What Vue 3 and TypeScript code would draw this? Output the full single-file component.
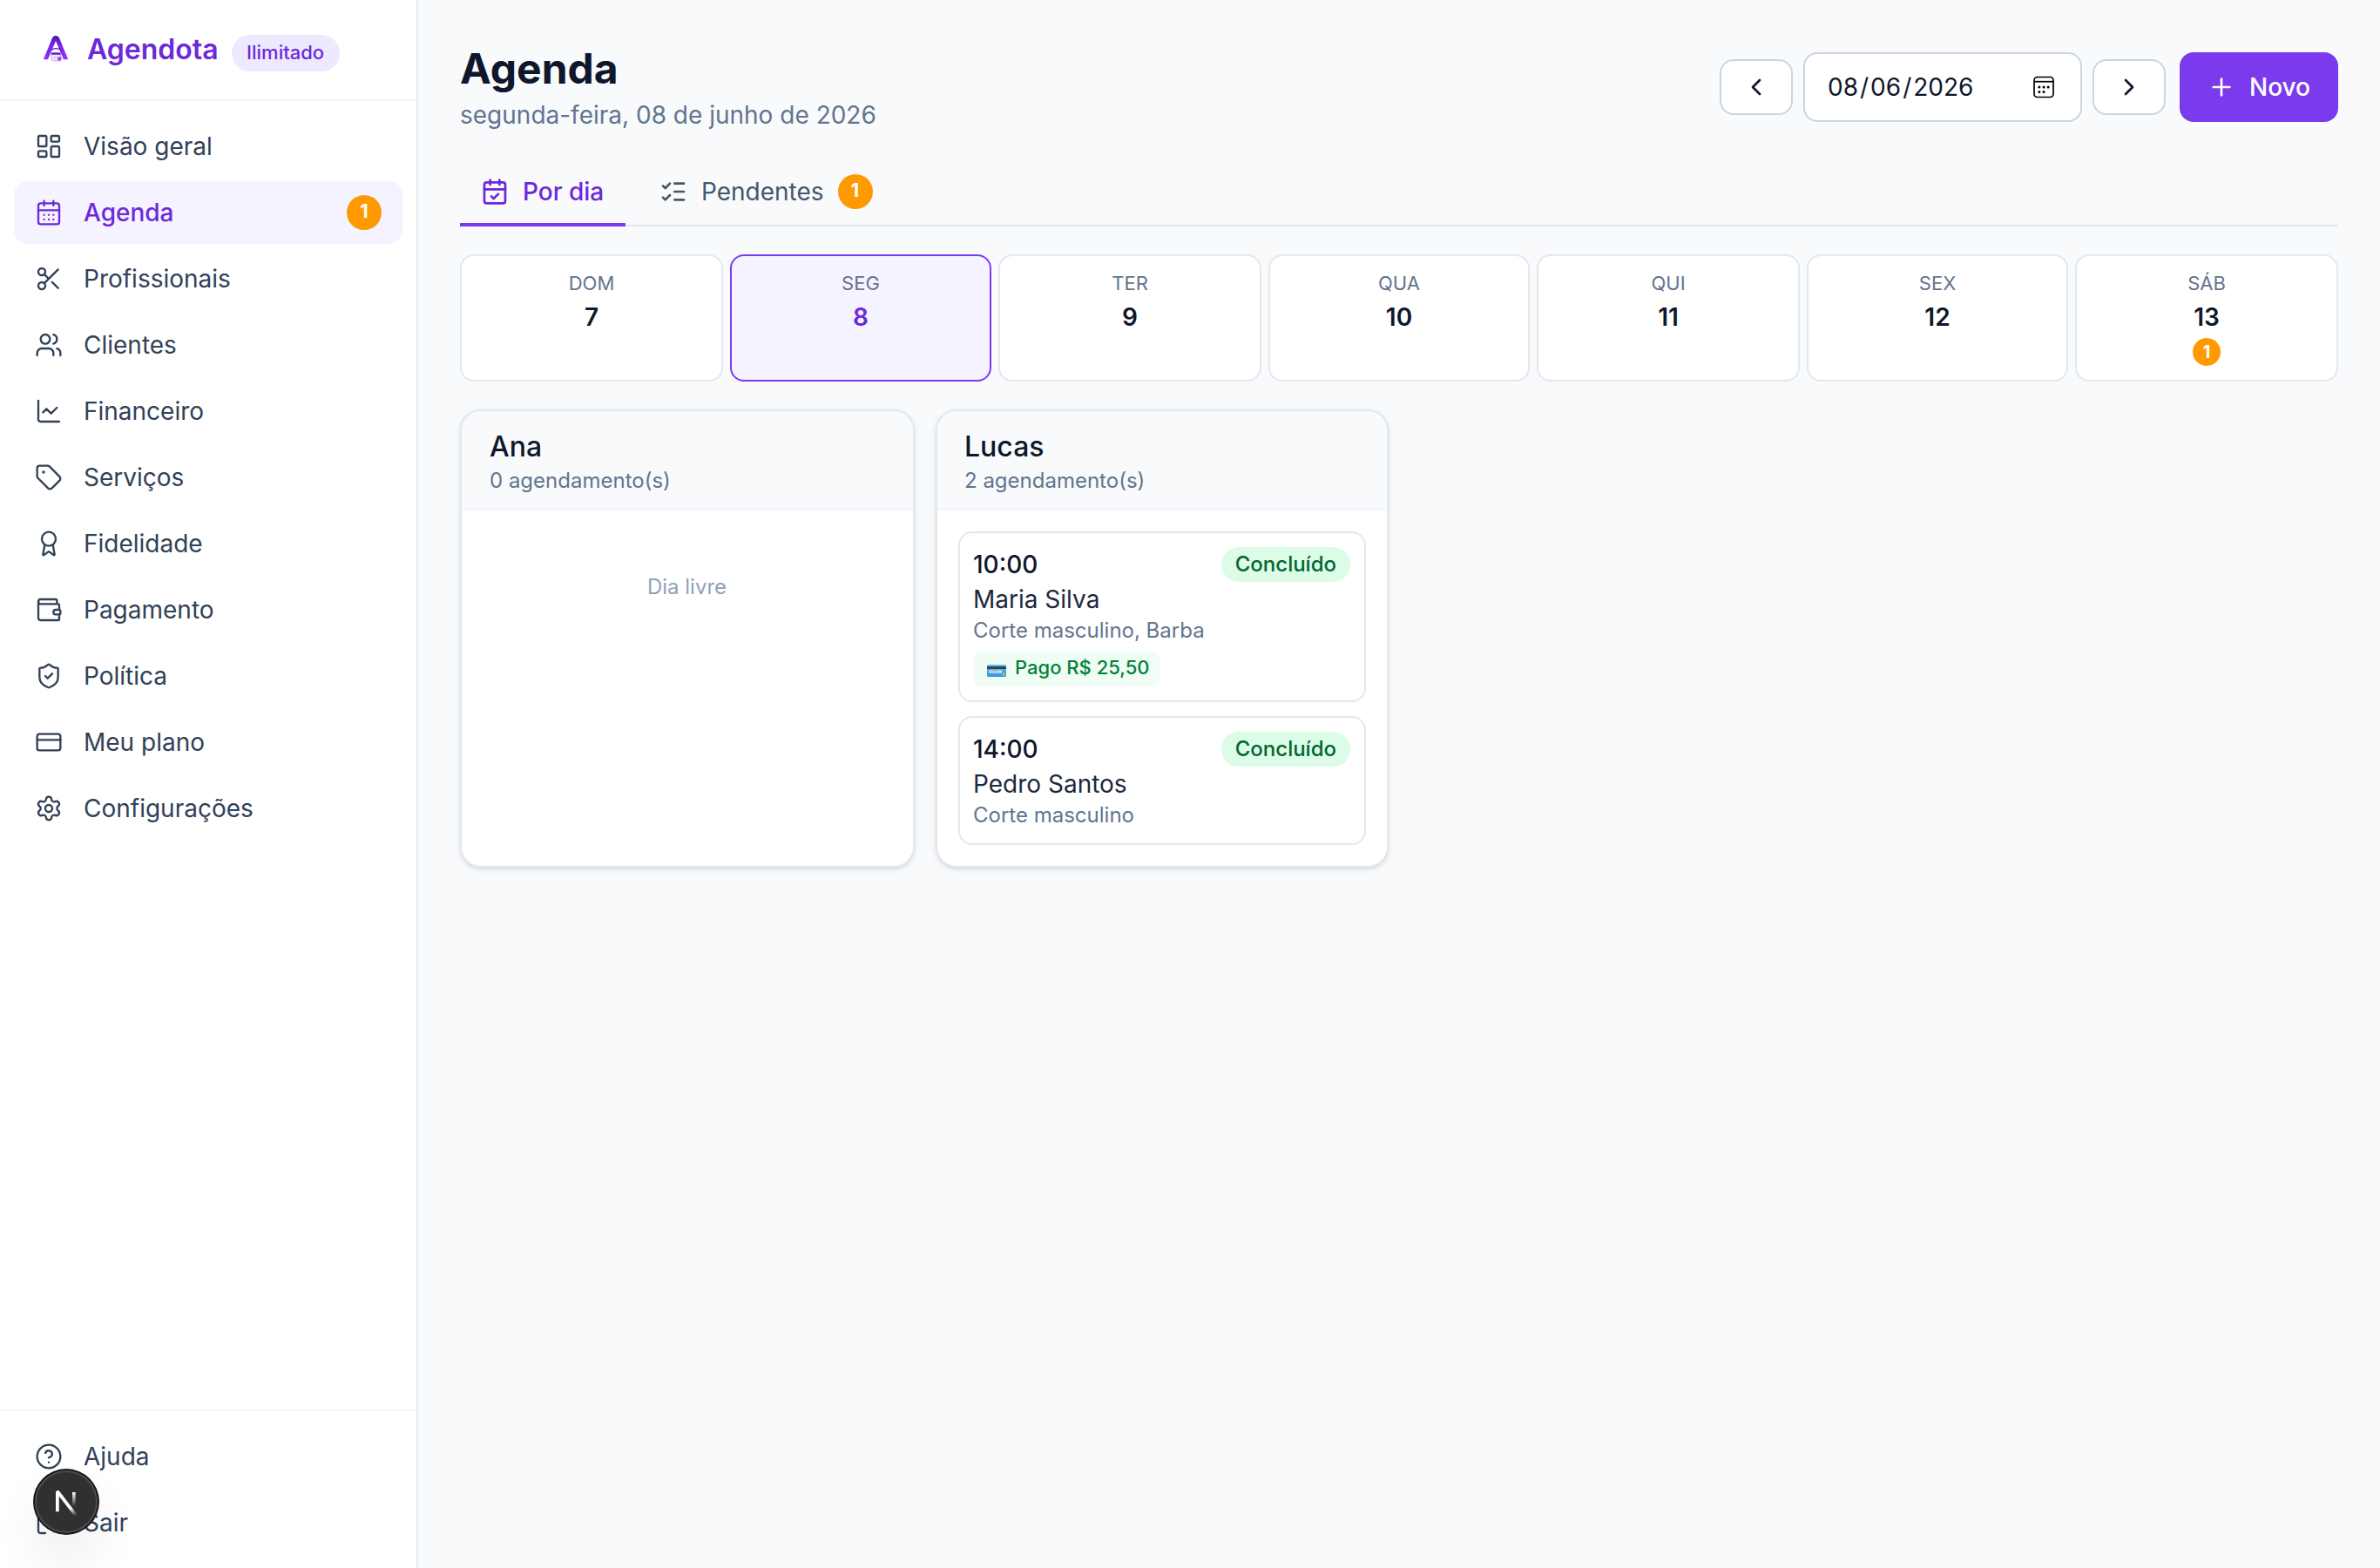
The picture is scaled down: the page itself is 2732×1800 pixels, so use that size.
<script setup lang="ts">
interface NavItem {
  label: string
  icon: string
  active?: boolean
  badge?: number
}

interface Day {
  label: string
  number: number
  selected?: boolean
  pending?: number
}

interface Appointment {
  time: string
  client: string
  services: string
  status: string
  paid?: string
}

interface Professional {
  name: string
  appointments: Appointment[]
}

const icons: Record<string, string> = {
  dashboard:
    '<rect width="7" height="9" x="3" y="3" rx="1"/><rect width="7" height="5" x="14" y="3" rx="1"/><rect width="7" height="9" x="14" y="12" rx="1"/><rect width="7" height="5" x="3" y="16" rx="1"/>',
  calendar:
    '<path d="M8 2v4"/><path d="M16 2v4"/><rect width="18" height="18" x="3" y="4" rx="2"/><path d="M3 10h18"/><path d="M8 14h.01"/><path d="M12 14h.01"/><path d="M16 14h.01"/><path d="M8 18h.01"/><path d="M12 18h.01"/><path d="M16 18h.01"/>',
  scissors:
    '<circle cx="6" cy="6" r="3"/><path d="M8.12 8.12 12 12"/><path d="M20 4 8.12 15.88"/><circle cx="6" cy="18" r="3"/><path d="M14.8 14.8 20 20"/>',
  users:
    '<path d="M16 21v-2a4 4 0 0 0-4-4H6a4 4 0 0 0-4 4v2"/><path d="M16 3.128a4 4 0 0 1 0 7.744"/><path d="M22 21v-2a4 4 0 0 0-3-3.87"/><circle cx="9" cy="7" r="4"/>',
  chart: '<path d="M3 3v16a2 2 0 0 0 2 2h16"/><path d="m19 9-5 5-4-4-3 3"/>',
  tag:
    '<path d="M12.586 2.586A2 2 0 0 0 11.172 2H4a2 2 0 0 0-2 2v7.172a2 2 0 0 0 .586 1.414l8.704 8.704a2.426 2.426 0 0 0 3.42 0l6.58-6.58a2.426 2.426 0 0 0 0-3.42z"/><circle cx="7.5" cy="7.5" r=".5" fill="currentColor"/>',
  award:
    '<path d="m15.477 12.89 1.515 8.526a.5.5 0 0 1-.81.47l-3.58-2.687a1 1 0 0 0-1.197 0l-3.586 2.686a.5.5 0 0 1-.81-.469l1.514-8.526"/><circle cx="12" cy="8" r="6"/>',
  wallet:
    '<path d="M19 7V4a1 1 0 0 0-1-1H5a2 2 0 0 0 0 4h15a1 1 0 0 1 1 1v4h-3a2 2 0 0 0 0 4h3a1 1 0 0 0 1-1v-2a1 1 0 0 0-1-1"/><path d="M3 5v14a2 2 0 0 0 2 2h15a1 1 0 0 0 1-1v-4"/>',
  shield:
    '<path d="M20 13c0 5-3.5 7.5-7.66 8.95a1 1 0 0 1-.67-.01C7.5 20.5 4 18 4 13V6a1 1 0 0 1 1-1c2 0 4.5-1.2 6.24-2.72a1.17 1.17 0 0 1 1.52 0C14.51 3.81 17 5 19 5a1 1 0 0 1 1 1z"/><path d="m9 12 2 2 4-4"/>',
  card: '<rect width="20" height="14" x="2" y="5" rx="2"/><path d="M2 10h20"/>',
  settings:
    '<path d="M9.671 4.136a2.34 2.34 0 0 1 4.659 0 2.34 2.34 0 0 0 3.319 1.915 2.34 2.34 0 0 1 2.33 4.033 2.34 2.34 0 0 0 0 3.831 2.34 2.34 0 0 1-2.33 4.033 2.34 2.34 0 0 0-3.319 1.915 2.34 2.34 0 0 1-4.659 0 2.34 2.34 0 0 0-3.32-1.915 2.34 2.34 0 0 1-2.33-4.033 2.34 2.34 0 0 0 0-3.831A2.34 2.34 0 0 1 6.35 6.051a2.34 2.34 0 0 0 3.319-1.915"/><circle cx="12" cy="12" r="3"/>',
  help:
    '<circle cx="12" cy="12" r="10"/><path d="M9.09 9a3 3 0 0 1 5.83 1c0 2-3 3-3 3"/><path d="M12 17h.01"/>',
  logout:
    '<path d="m16 17 5-5-5-5"/><path d="M21 12H9"/><path d="M9 21H5a2 2 0 0 1-2-2V5a2 2 0 0 1 2-2h4"/>',
  calendarCheck:
    '<path d="M8 2v4"/><path d="M16 2v4"/><rect width="18" height="18" x="3" y="4" rx="2"/><path d="M3 10h18"/><path d="m9 16 2 2 4-4"/>',
  listChecks:
    '<path d="M13 5h8"/><path d="M13 12h8"/><path d="M13 19h8"/><path d="m3 17 2 2 4-4"/><path d="m3 7 2 2 4-4"/>',
  left: '<path d="m15 18-6-6 6-6"/>',
  right: '<path d="m9 18 6-6-6-6"/>',
  plus: '<path d="M5 12h14"/><path d="M12 5v14"/>',
}

const nav: NavItem[] = [
  { label: 'Visão geral', icon: 'dashboard' },
  { label: 'Agenda', icon: 'calendar', active: true, badge: 1 },
  { label: 'Profissionais', icon: 'scissors' },
  { label: 'Clientes', icon: 'users' },
  { label: 'Financeiro', icon: 'chart' },
  { label: 'Serviços', icon: 'tag' },
  { label: 'Fidelidade', icon: 'award' },
  { label: 'Pagamento', icon: 'wallet' },
  { label: 'Política', icon: 'shield' },
  { label: 'Meu plano', icon: 'card' },
  { label: 'Configurações', icon: 'settings' },
]

const footerNav: NavItem[] = [
  { label: 'Ajuda', icon: 'help' },
  { label: 'Sair', icon: 'logout' },
]

const days: Day[] = [
  { label: 'Dom', number: 7 },
  { label: 'Seg', number: 8, selected: true },
  { label: 'Ter', number: 9 },
  { label: 'Qua', number: 10 },
  { label: 'Qui', number: 11 },
  { label: 'Sex', number: 12 },
  { label: 'Sáb', number: 13, pending: 1 },
]

const professionals: Professional[] = [
  { name: 'Ana', appointments: [] },
  {
    name: 'Lucas',
    appointments: [
      {
        time: '10:00',
        client: 'Maria Silva',
        services: 'Corte masculino, Barba',
        status: 'Concluído',
        paid: 'Pago R$ 25,50',
      },
      { time: '14:00', client: 'Pedro Santos', services: 'Corte masculino', status: 'Concluído' },
    ],
  },
]
</script>

<template>
  <div class="shell">
    <aside class="sidebar">
      <div class="brand">
        <svg class="logo" viewBox="0 0 32 32">
          <defs>
            <linearGradient id="logoFill" x1="0" y1="0" x2="0" y2="1">
              <stop offset="0" stop-color="#4c12b4" />
              <stop offset="0.4" stop-color="#7c22ee" />
              <stop offset="1" stop-color="#9333f5" />
            </linearGradient>
          </defs>
          <path
            d="M1.8 28.2 12 3.6C12.8 1.8 14.2.9 16 .9s3.200.9 4 2.700L30.200 28.200h-5.200L16 7 7 28.200Z"
            fill="url(#logoFill)"
          />
          <path d="M8.600 21.500C11 15.400 20 14.200 23.300 20.500L22 17.200C18.500 13.800 12.500 14.200 10 18Z" fill="#4c12b4" />
          <rect x="11" y="20.500" width="10.500" height="9.300" rx="1.500" fill="#f3edff" stroke="#bfa0f2" stroke-width="0.900" />
          <path d="M11 20.500h10.500v2.300H11Z" fill="#5a1fc0" />
          <path d="M13 25.300h5M13 27.600h4" stroke="#c9b3f3" stroke-width="1" />
          <circle cx="20.300" cy="27.500" r="2.400" fill="#9b4df5" />
        </svg>
        <span class="brand-name">Agendota</span>
        <span class="plan">Ilimitado</span>
      </div>

      <nav class="nav">
        <a v-for="item in nav" :key="item.label" class="nav-item" :class="{ active: item.active }">
          <svg class="icon thin" viewBox="0 0 24 24" v-html="icons[item.icon]" />
          <span class="nav-label">{{ item.label }}</span>
          <span v-if="item.badge" class="count">{{ item.badge }}</span>
        </a>
      </nav>

      <div class="nav nav-footer">
        <a v-for="item in footerNav" :key="item.label" class="nav-item">
          <svg class="icon thin" viewBox="0 0 24 24" v-html="icons[item.icon]" />
          <span class="nav-label">{{ item.label }}</span>
        </a>
      </div>
    </aside>

    <main class="main">
      <header class="page-head">
        <div>
          <h1>Agenda</h1>
          <p class="subtitle">segunda-feira, 08 de junho de 2026</p>
        </div>
        <div class="controls">
          <button class="step">
            <svg class="icon" viewBox="0 0 24 24" v-html="icons.left" />
          </button>
          <div class="date">
            <span class="date-value"><i>08</i>/<i>06</i>/<i>2026</i></span>
            <svg class="date-icon" viewBox="0 0 24 26">
              <rect x="1" y="1.500" width="22" height="23" rx="3.500" fill="none" stroke="#000" stroke-width="1.700" />
              <path d="M1 6.700h22" stroke="#000" stroke-width="1.700" />
              <g fill="#000">
                <circle cx="6.900" cy="13" r="1.500" />
                <circle cx="12" cy="13" r="1.500" />
                <circle cx="17.100" cy="13" r="1.500" />
                <circle cx="6.900" cy="18.400" r="1.500" />
                <circle cx="12" cy="18.400" r="1.500" />
              </g>
            </svg>
          </div>
          <button class="step">
            <svg class="icon" viewBox="0 0 24 24" v-html="icons.right" />
          </button>
          <button class="new">
            <svg class="icon" viewBox="0 0 24 24" v-html="icons.plus" />
            <span>Novo</span>
          </button>
        </div>
      </header>

      <div class="tabs">
        <a class="tab active">
          <svg class="icon" viewBox="0 0 24 24" v-html="icons.calendarCheck" />
          <span>Por dia</span>
        </a>
        <a class="tab">
          <svg class="icon" viewBox="0 0 24 24" v-html="icons.listChecks" />
          <span>Pendentes</span>
          <span class="count">1</span>
        </a>
      </div>

      <div class="week">
        <div v-for="day in days" :key="day.label" class="day" :class="{ selected: day.selected }">
          <span class="day-label">{{ day.label }}</span>
          <span class="day-number">{{ day.number }}</span>
          <span v-if="day.pending" class="day-count">{{ day.pending }}</span>
        </div>
      </div>

      <div class="columns">
        <section v-for="pro in professionals" :key="pro.name" class="column">
          <div class="column-head">
            <div class="column-name">{{ pro.name }}</div>
            <div class="column-total">{{ pro.appointments.length }} agendamento(s)</div>
          </div>
          <div class="column-body">
            <p v-if="!pro.appointments.length" class="empty">Dia livre</p>
            <article v-for="appt in pro.appointments" :key="appt.time" class="appt">
              <div class="appt-top">
                <span class="appt-time">{{ appt.time }}</span>
                <span class="status">{{ appt.status }}</span>
              </div>
              <div class="appt-client">{{ appt.client }}</div>
              <div class="appt-services">{{ appt.services }}</div>
              <div v-if="appt.paid" class="paid">
                <svg class="paid-icon" viewBox="0 0 22 14">
                  <defs>
                    <linearGradient id="cardFill" x1="0" y1="0" x2="0" y2="1">
                      <stop offset="0" stop-color="#55c4f2" />
                      <stop offset="1" stop-color="#2d9be0" />
                    </linearGradient>
                  </defs>
                  <rect width="22" height="14" rx="1.500" fill="url(#cardFill)" />
                  <rect y="2" width="22" height="3" fill="#37414f" />
                  <rect x="2.300" y="6.400" width="15" height="3.300" rx="1" fill="#d4dde8" />
                  <path d="M4 8h9" stroke="#a3a7b5" stroke-width="0.900" />
                  <rect x="18" y="9.800" width="2.400" height="3" fill="#e3c03c" />
                </svg>
                <span>{{ appt.paid }}</span>
              </div>
            </article>
          </div>
        </section>
      </div>
    </main>

    <div class="dev-badge">
      <svg viewBox="0 0 72 72">
        <defs>
          <linearGradient id="diagFade" gradientUnits="userSpaceOnUse" x1="9.950" y1="10.630" x2="13.300" y2="15.200">
            <stop stop-color="#fff" />
            <stop offset="0.900" stop-color="#fff" stop-opacity="0" />
          </linearGradient>
          <linearGradient id="barFade" gradientUnits="userSpaceOnUse" x1="11.820" y1="1.500" x2="11.800" y2="9.600">
            <stop stop-color="#fff" />
            <stop offset="1" stop-color="#fff" stop-opacity="0" />
          </linearGradient>
        </defs>
        <g transform="translate(21.200 22) scale(2)" fill="none" stroke-width="1.860">
          <path d="M13.300 15.200 2.340 1V12.600" stroke="url(#diagFade)" stroke-linejoin="bevel" />
          <path d="M11.825 1.500V13.100" stroke="url(#barFade)" />
        </g>
      </svg>
    </div>
  </div>
</template>

<style>
html,
body {
  margin: 0;
  background: #f8fafc;
}
</style>

<style scoped>
.shell {
  position: relative;
  display: flex;
  width: 2732px;
  height: 1800px;
  overflow: hidden;
  background: #f8fafc;
  color: #0f172b;
  font-family: Inter, 'Liberation Sans', sans-serif;
  font-size: 28px;
  line-height: 40px;
}

.shell *,
.shell *::before {
  box-sizing: border-box;
}

.icon {
  flex: none;
  width: 32px;
  height: 32px;
  fill: none;
  stroke: currentColor;
  stroke-width: 2;
  stroke-linecap: round;
  stroke-linejoin: round;
}

.icon.thin {
  stroke-width: 1.75;
}

/* Sidebar */
.sidebar {
  display: flex;
  flex: none;
  flex-direction: column;
  width: 480px;
  border-right: 2px solid #e2e8f0;
  background: #fff;
}

.brand {
  display: flex;
  align-items: flex-start;
  height: 116px;
  padding: 40px 48px 0;
  border-bottom: 2px solid #f1f5f9;
}

.logo {
  width: 32px;
  height: 32px;
}

.brand-name {
  margin-left: 20px;
  color: #6d28d9;
  font-size: 32px;
  font-weight: 600;
  line-height: 34px;
}

.plan {
  width: 124px;
  height: 42px;
  margin-left: 15px;
  border-radius: 21px;
  background: #ede9fe;
  color: #6d28d9;
  font-size: 22px;
  font-weight: 500;
  line-height: 40px;
  text-align: center;
}

.nav {
  display: flex;
  flex: 1;
  flex-direction: column;
  gap: 4px;
  padding: 16px;
}

.nav-footer {
  flex: none;
  border-top: 2px solid #f1f5f9;
}

.nav-item {
  display: flex;
  align-items: center;
  gap: 24px;
  height: 72px;
  padding: 0 24px;
  border-radius: 16px;
  color: #314158;
}

.nav-label {
  flex: 1;
}

.nav-item.active {
  background: #f5f3ff;
  color: #6d28d9;
  font-weight: 500;
}

.count {
  flex: none;
  width: 40px;
  height: 40px;
  border-radius: 50%;
  background: #fe9a00;
  color: #fff;
  font-size: 22px;
  font-weight: 700;
  line-height: 36px;
  text-align: center;
}

/* Page header */
.main {
  flex: 1;
  padding: 48px;
}

.page-head {
  display: flex;
  align-items: center;
  justify-content: space-between;
  height: 104px;
}

h1 {
  margin: 0 0 3px;
  font-size: 48px;
  font-weight: 700;
  line-height: 61px;
}

.subtitle {
  margin: 0;
  color: #62748e;
}

.controls {
  display: flex;
  align-items: center;
  gap: 12px;
}

button {
  display: flex;
  align-items: center;
  margin: 0;
  border: 0;
  font: inherit;
}

.step {
  height: 64px;
  padding: 0 24px;
  border: 2px solid #cad5e2;
  border-radius: 16px;
  background: #fff;
  color: #0f172b;
}

.date {
  display: flex;
  align-items: center;
  justify-content: space-between;
  width: 320px;
  height: 80px;
  padding: 0 30px 0 24px;
  border: 2px solid #cad5e2;
  border-radius: 16px;
  background: #fff;
}

.date-value i {
  padding: 0 2px;
  font-style: normal;
}

.date-icon {
  width: 24px;
  height: 26px;
}

.new {
  gap: 16px;
  width: 182px;
  height: 80px;
  margin-left: 4px;
  padding: 0 32px;
  border-radius: 16px;
  background: #7c3aed;
  color: #fff;
  font-weight: 500;
}

/* Tabs */
.tabs {
  display: flex;
  gap: 15px;
  height: 76px;
  margin-top: 32px;
  border-bottom: 2px solid #e2e8f0;
}

.tab {
  display: flex;
  align-items: center;
  gap: 16px;
  min-width: 190px;
  height: 76px;
  padding: 16px 24px;
  border-bottom: 4px solid transparent;
  color: #45556c;
}

.tab.active {
  border-color: #7c3aed;
  color: #6d28d9;
  font-weight: 500;
}

/* Week strip */
.week {
  display: grid;
  grid-template-columns: 302px repeat(3, 300px 302px);
  gap: 8px;
  margin-top: 32px;
}

.day {
  display: flex;
  flex-direction: column;
  align-items: center;
  height: 146px;
  padding: 16px;
  border: 2px solid #e2e8f0;
  border-radius: 16px;
  background: #fff;
}

.day-label {
  margin: 1px 0 5px;
  color: #62748e;
  font-size: 22px;
  line-height: 28px;
  text-transform: uppercase;
}

.day-number {
  font-weight: 600;
}

.day-count {
  width: 32px;
  height: 32px;
  margin-top: 4px;
  border-radius: 50%;
  background: #fe9a00;
  color: #fff;
  font-size: 20px;
  font-weight: 700;
  line-height: 32px;
  text-align: center;
}

.day.selected {
  border-color: #7c3aed;
  background: #f5f3ff;
}

.day.selected .day-number {
  color: #6d28d9;
}

/* Professional columns */
.columns {
  display: grid;
  grid-template-columns: repeat(2, 522px 520px);
  gap: 24px;
  margin-top: 32px;
}

.column {
  overflow: hidden;
  border: 2px solid #e2e8f0;
  border-radius: 24px;
  background: #fff;
  box-shadow:
    0 2px 6px rgba(0, 0, 0, 0.1),
    0 2px 4px -2px rgba(0, 0, 0, 0.1);
}

.column-head {
  padding: 17px 32px 16px;
  border-bottom: 2px solid #f1f5f9;
  background: #f8fafc;
}

.column:nth-child(even) .column-head {
  padding-left: 31px;
}

.column-name {
  font-size: 32px;
  font-weight: 500;
  line-height: 48px;
}

.column-total {
  margin-top: -1px;
  color: #62748e;
  font-size: 24px;
  line-height: 32px;
}

.column-body {
  display: flex;
  flex-direction: column;
  gap: 16px;
  padding: 24px;
}

.empty {
  margin: 48px 1px 48px 0;
  color: #90a1b9;
  font-size: 24px;
  line-height: 32px;
  text-align: center;
}

.appt {
  padding: 16px 16px 16px 15px;
  border: 2px solid #e2e8f0;
  border-radius: 16px;
}

.appt-top {
  display: flex;
  align-items: center;
  justify-content: space-between;
}

.appt-time {
  font-weight: 500;
}

.status {
  height: 40px;
  padding: 0 16px;
  border-radius: 20px;
  background: #dcfce7;
  color: #016630;
  font-size: 24px;
  font-weight: 500;
  line-height: 39px;
}

.appt-client {
  color: #1d293d;
}

.appt-services {
  color: #62748e;
  font-size: 24px;
  line-height: 32px;
}

.paid {
  display: flex;
  align-items: center;
  width: fit-content;
  height: 40px;
  margin: 8px 0 0 1px;
  padding: 0 12px 0 15px;
  border-radius: 8px;
  background: #f0fdf4;
  color: #008236;
  font-size: 22px;
  font-weight: 500;
  line-height: 36px;
}

.paid span {
  height: 40px;
}

.paid-icon {
  width: 22px;
  height: 14px;
  margin: 4px 10px 0 0;
}

/* Floating dev tools button */
.dev-badge {
  position: absolute;
  bottom: 40px;
  left: 40px;
  width: 72px;
  height: 72px;
  border-radius: 50%;
  background: #303030;
  box-shadow:
    0 0 0 2px #171717,
    inset 0 0 0 2px rgba(255, 255, 255, 0.14),
    0 32px 64px -16px rgba(0, 0, 0, 0.24);
}

.dev-badge svg {
  display: block;
}
</style>
